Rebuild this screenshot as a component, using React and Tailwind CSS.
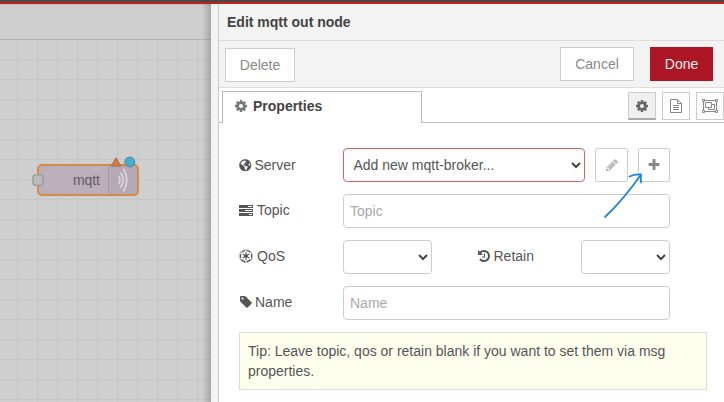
import { FaGlobeAmericas, FaEmpire } from 'react-icons/fa';

const PATHS = {
  cog: 'M1152 896q0-106-75-181t-181-75-181 75-75 181 75 181 181 75 181-75 75-181zm512-109v222q0 12-8 23t-20 13l-185 28q-19 54-39 91 35 50 107 138 10 12 10 25t-9 23q-27 37-99 108t-94 71q-12 0-26-9l-138-108q-44 23-91 38-16 136-29 186-7 28-36 28h-222q-14 0-24.5-8.5t-11.5-21.5l-28-184q-49-16-90-37l-141 107q-10 9-25 9-14 0-25-11-126-114-165-168-7-10-7-23 0-12 8-23 15-21 51-66.5t54-70.5q-27-50-41-99l-183-27q-13-2-21-12.5t-8-23.5v-222q0-12 8-23t19-13l186-28q14-46 39-92-40-57-107-138-10-12-10-24 0-10 9-23 26-36 98.5-107.5t94.5-71.5q13 0 26 10l138 107q44-23 91-38 16-136 29-186 7-28 36-28h222q14 0 24.5 8.5t11.5 21.5l28 184q49 16 90 37l142-107q9-9 24-9 13 0 25 10 129 119 165 170 7 8 7 22 0 12-8 23-15 21-51 66.5t-54 70.5q26 50 41 98l183 28q13 2 21 12.5t8 23.5z',
  plus: 'M1600 736v192q0 40-28 68t-68 28h-416v416q0 40-28 68t-68 28h-192q-40 0-68-28t-28-68v-416h-416q-40 0-68-28t-28-68v-192q0-40 28-68t68-28h416v-416q0-40 28-68t68-28h192q40 0 68 28t28 68v416h416q40 0 68 28t28 68z',
  pencil: 'M491 1536l91-91-235-235-91 91v107h128v128h107zm523-928q0-22-22-22-10 0-17 7l-542 542q-7 7-7 17 0 22 22 22 10 0 17-7l542-542q7-7 7-17zm-54-192l416 416-832 832h-416v-416zm683 96q0 53-37 90l-166 166-416-416 166-165q36-38 90-38 53 0 91 38l235 234q37 39 37 91z',
  tag: 'M576 448q0-53-37.5-90.5t-90.5-37.5-90.5 37.5-37.5 90.5 37.5 90.5 90.5 37.5 90.5-37.5 37.5-90.5zm1067 576q0 53-37 90l-491 492q-39 37-91 37-53 0-90-37l-715-716q-38-37-64.5-101t-26.5-117v-416q0-52 38-90t90-38h416q53 0 117 26.5t102 64.5l715 714q37 39 37 91z',
  history: 'M1664 896q0 156-61 298t-164 245-245 164-298 61q-172 0-327-72.5t-264-204.5q-7-10-6.5-22.5t8.5-20.5l137-138q10-9 25-9 16 2 23 12 73 95 179 147t225 52q104 0 198.5-40.5t163.5-109.5 109.5-163.5 40.5-198.5-40.5-198.5-109.5-163.5-163.5-109.5-198.5-40.5q-98 0-188 35.5t-160 101.5l137 138q31 30 14 69-17 40-59 40h-448q-26 0-45-19t-19-45v-448q0-42 40-59 39-17 69 14l130 129q107-101 244.5-156.5t284.5-55.5q156 0 298 61t245 164 164 245 61 298zm-640-288v448q0 14-9 23t-23 9h-320q-14 0-23-9t-9-23v-64q0-14 9-23t23-9h224v-352q0-14 9-23t23-9h64q14 0 23 9t9 23z',
};

function Icon({ name, className = '' }) {
  return (
    <svg viewBox="0 0 1792 1792" fill="currentColor" className={`size-[14px] shrink-0 ${className}`}>
      <path d={PATHS[name]} />
    </svg>
  );
}

function TasksIcon() {
  return (
    <svg viewBox="0 0 14 11" className="h-[11px] w-[14px] shrink-0" fill="currentColor">
      <path fillRule="evenodd" d="M0 0h14v3H0zM9 1v1h4v-1zM0 4h14v3H0zM6 5v1h7v-1zM0 8h14v3H0zM10 9v1h3v-1z" />
    </svg>
  );
}

function FileIcon() {
  return (
    <svg viewBox="0 0 12 14" className="h-[14px] w-3" fill="none" stroke="currentColor">
      <path d="M.5.5h7l4 4v9H.5zM7.500.5v4h4M3 6.500h6M3 8.500h6M3 10.500h6" />
    </svg>
  );
}

function ObjectGroupIcon() {
  return (
    <svg viewBox="0 0 16 14" className="h-[14px] w-4 shrink-0" fill="none" stroke="currentColor">
      <path d="M1.500 1.500h13v11h-13z" />
      <path d="M.5.5h2v2h-2zM13.500.5h2v2h-2zM.5 11.500h2v2h-2zM13.500 11.500h2v2h-2z" fill="white" />
      <path d="M3.500 3.500h6v5h-6zM9.500 5.500h3v5h-6v-2" />
    </svg>
  );
}

function Select({ children, className }) {
  return (
    <div className={`flex h-[34px] items-center justify-between rounded-[4px] border bg-white pr-[3px] pl-[9.5px] ${className}`}>
      <span>{children}</span>
      <svg viewBox="0 0 10 7" className="mt-px h-[7px] w-[10px]" fill="none" stroke="#444" strokeWidth="2">
        <path d="M1 1l4 4 4-4" />
      </svg>
    </div>
  );
}

function Label({ icon, children, className = 'w-[104px] pb-[2px]' }) {
  return (
    <div className={`flex shrink-0 items-center ${className}`}>
      {icon}
      <span>{children}</span>
    </div>
  );
}

function TextInput({ placeholder }) {
  return (
    <input
      placeholder={placeholder}
      className="h-[34px] w-[327px] rounded-[4px] border border-[#ccc] bg-white px-[6px] outline-none placeholder:text-[#a9a9a9]"
    />
  );
}

function Workspace() {
  return (
    <div className="relative flex w-[211px] shrink-0 flex-col overflow-hidden bg-[#cfcfcf]">
      <div className="h-[36px] shrink-0 border-t border-b border-t-[#bdbdbd] border-b-[#b3b3b3]" />
      <svg className="h-[362px] w-[211px] shrink-0" viewBox="0 40 211 362">
        <defs>
          <pattern id="grid" x="17" y="59" width="20" height="20" patternUnits="userSpaceOnUse">
            <path d="M0 .5h20M.5 0v20" stroke="#c6c6c6" fill="none" />
          </pattern>
        </defs>
        <rect y="40" width="211" height="362" fill="url(#grid)" />
        <rect x="38" y="165" width="100" height="30" rx="4" fill="#bcafbc" stroke="#d58b47" strokeWidth="2" />
        <path d="M112 166h21q4 0 4 4v20q0 4-4 4h-25v-28z" fill="#b5a9b5" />
        <path d="M108.500 166v28" stroke="#a69ba6" />
        <g fill="none" stroke="#d9d5d9" strokeWidth="1.800">
          <path d="M118.500 176q2.800 4 0 8" />
          <path d="M120.500 172.500q5.500 7.500 0 15" />
          <path d="M123.300 168.500q7 11.500 0 23" />
        </g>
        <rect x="33" y="174.800" width="10" height="10.500" rx="2.500" fill="#bababa" stroke="#999" strokeWidth="1.300" />
        <text x="73" y="185" fontSize="14" fill="#605d64" fontFamily="'Liberation Sans', Arial, sans-serif" textLength="27">mqtt</text>
        <path d="M116 157.800l4.700 8.200h-9.400z" fill="#d18144" stroke="#b46045" strokeLinejoin="round" />
        <circle cx="129.800" cy="162" r="5" fill="#4cabcb" stroke="#428fa8" />
      </svg>
      <div className="absolute inset-y-0 right-0 w-[9px] bg-linear-to-r from-transparent to-black/20" />
    </div>
  );
}

export default function App() {
  return (
    <div className="flex h-[402px] w-[724px] flex-col overflow-hidden bg-white font-['Liberation_Sans',Arial,sans-serif] text-[14px] leading-[20px] text-[#555]">
      <div className="h-1 shrink-0 border-b-2 border-[#c02020] bg-[#484848]" />
      <div className="flex min-h-0 grow">
        <Workspace />
        <div className="w-2 shrink-0 border-r border-[#ccc] bg-[#f3f3f3]" />
        <main className="min-w-0 grow">
          <header className="flex h-[37px] items-center border-b border-[#ddd] bg-[#f3f3f3] pl-2 font-bold text-[#444]">Edit mqtt out node</header>
          <div className="flex h-[47px] items-start border-b border-[#ddd] bg-[#f3f3f3] pt-[6px] pr-[11px] pl-[6px] text-[#888]">
            <button className="mt-px h-[34px] w-[70px] border border-[#ccc] bg-white">Delete</button>
            <button className="ml-auto h-[34px] w-[74px] border border-[#ccc] bg-white">Cancel</button>
            <button className="ml-4 h-[34px] w-[63px] bg-[#ad1625] text-[#eee]">Done</button>
          </div>
          <div className="flex h-[35px] items-end">
            <div className="h-px w-[3px] bg-[#bbb]" />
            <div className="flex h-8 w-[200px] items-center gap-[5px] border border-b-0 border-[#bbb] pb-[4px] pl-[11px] font-bold text-[#444]">
              <Icon name="cog" className="text-[#777]" />
              Properties
            </div>
            <div className="flex h-[31px] grow justify-end gap-[6px] border-b border-[#bbb] text-[#888]">
              <div className="flex size-7 shrink-0 items-center justify-center border border-b-2 border-[#ccc] border-b-[#aaa] bg-[#efefef] text-[#666]">
                <Icon name="cog" />
              </div>
              <div className="flex size-7 shrink-0 items-center justify-center border border-[#ccc]"><FileIcon /></div>
              <div className="flex size-7 shrink-0 items-center justify-center border border-[#ccc]"><ObjectGroupIcon /></div>
            </div>
          </div>
          <form className="relative flex flex-col gap-3 pt-[25px] pl-5">
            <div className="flex items-center">
              <Label className="w-[104px]" icon={<FaGlobeAmericas className="mr-[3px] size-[12.500px]" />}>Server</Label>
              <Select className="w-[242px] border-[#d6615f]">Add new mqtt-broker...</Select>
              <button type="button" className="ml-[10px] flex h-[34px] w-[33px] items-center justify-center rounded-[2px] border border-[#ccc] text-[#bbb]"><Icon name="pencil" /></button>
              <button type="button" className="ml-[10px] flex h-[34px] w-8 items-center justify-center rounded-[2px] border border-[#ccc] pb-px text-[#888]"><Icon name="plus" /></button>
            </div>
            <div className="flex items-center">
              <Label icon={<span className="mr-1"><TasksIcon /></span>}>Topic</Label>
              <TextInput placeholder="Topic" />
            </div>
            <div className="flex items-center">
              <Label icon={<FaEmpire className="mr-1 size-[14px]" />}>QoS</Label>
              <Select className="w-[89px] border-[#ccc]" />
              <Label className="ml-[45px] w-[104px] pb-[2px]" icon={<Icon name="history" className="mr-[3px] -ml-[0.500px]" />}>Retain</Label>
              <Select className="w-[89px] border-[#ccc]" />
            </div>
            <div className="flex items-center">
              <Label icon={<Icon name="tag" className="mr-[2px]" />}>Name</Label>
              <TextInput placeholder="Name" />
            </div>
            <div className="h-[58px] w-[468px] border border-[#ddd] bg-[#ffffee] py-2 pr-9 pl-2">
              Tip: Leave topic, qos or retain blank if you want to set them via msg properties.
            </div>
            <svg className="pointer-events-none absolute top-[47px] left-[380px] h-[52px] w-[46px]" viewBox="0 0 46 52" fill="none" stroke="#1c86d9" strokeWidth="1.800" strokeLinecap="round" strokeLinejoin="round">
              <path d="M6 47Q25 29 42 4.500M30.500 6.500Q36 4 42 4.500Q41.500 8 42 12.500" />
            </svg>
          </form>
        </main>
      </div>
    </div>
  );
}
